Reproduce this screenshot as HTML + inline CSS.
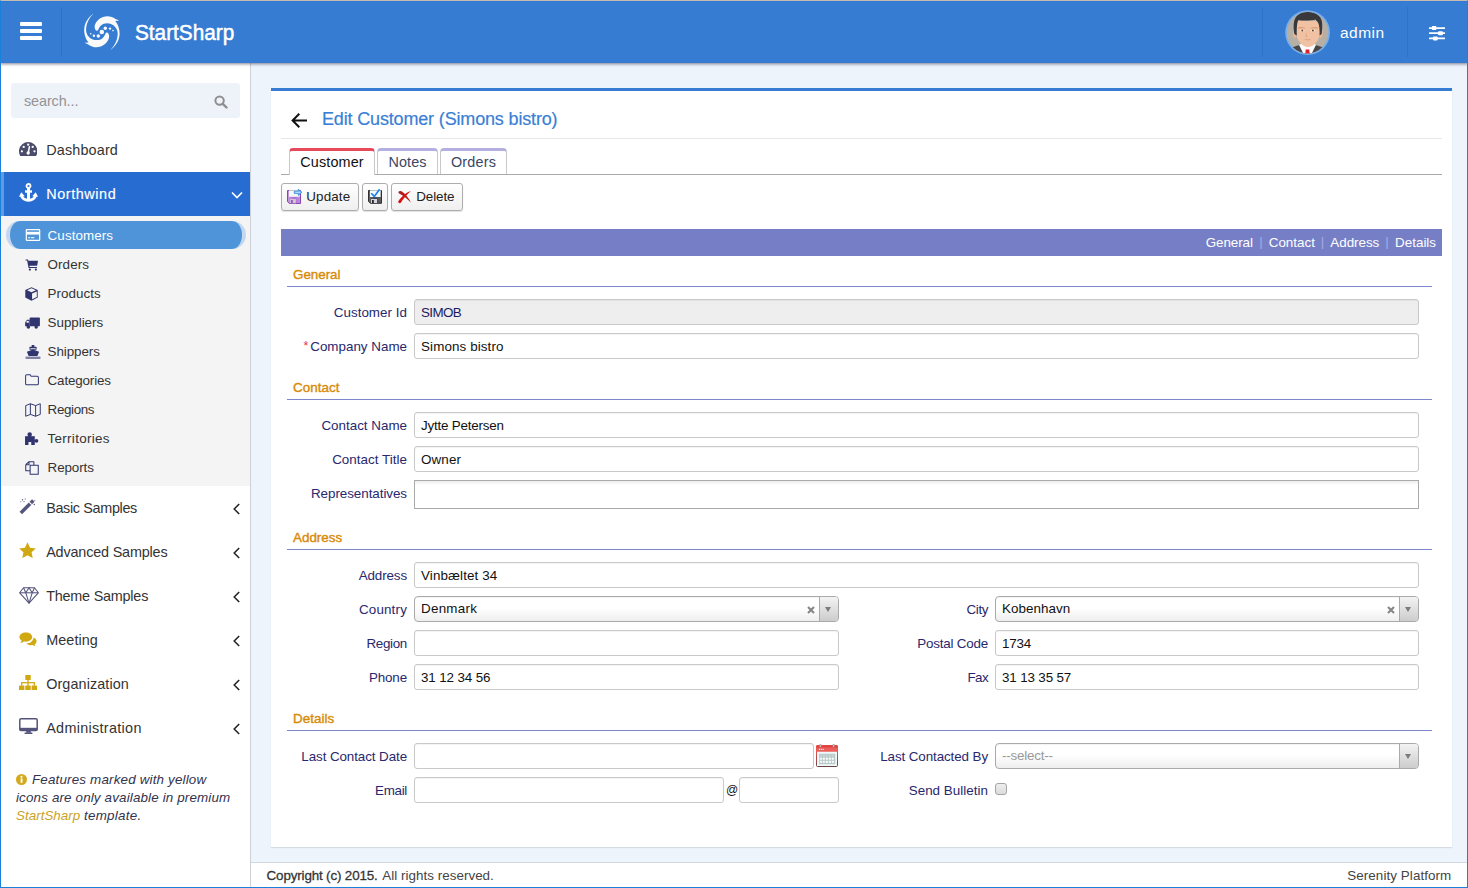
<!DOCTYPE html>
<html lang="en">
<head>
<meta charset="utf-8">
<title>Edit Customer (Simons bistro) - StartSharp</title>
<style>
*{box-sizing:border-box;margin:0;padding:0}
html,body{width:1468px;height:888px;overflow:hidden}
body{position:relative;background:#edf4fc;font-family:"Liberation Sans","DejaVu Sans",sans-serif;font-size:13.400px;color:#333}
.abs{position:absolute}
span.w{white-space:nowrap}
#winframe{position:absolute;left:0;top:0;width:1468px;height:888px;border-left:1px solid #1a80da;border-right:1px solid #1a80da;border-bottom:1px solid #1a80da;border-top:1px solid #c8bcb0;z-index:50;pointer-events:none}
#header{position:absolute;left:0;top:1px;width:1468px;height:62px;background:#367cd2;box-shadow:0 1px 3px rgba(50,40,70,.6),inset 0 1px 0 #2f79d8;z-index:10}
#header .sep{position:absolute;top:6px;width:1px;height:50px;background:#2f72cc}
#brand{position:absolute;left:134.500px;top:15.500px;font-size:22px;color:#fff;line-height:32px;white-space:nowrap;-webkit-text-stroke:.5px #fff;transform-origin:0 50%}
#uname{position:absolute;left:1340px;top:22px;font-size:15.500px;color:#fff;line-height:20px;white-space:nowrap}
#sidebar{position:absolute;left:1px;top:63px;width:250px;height:824px;background:#fff;border-right:1px solid #cdd0d4}
#search{position:absolute;left:10px;top:20px;width:229px;height:35px;background:#eef2f9;border-radius:3px}
#search>span{position:absolute;left:13px;top:9.300px;font-size:14.400px;color:#949494;line-height:18px}
.mi{position:absolute;left:0;width:249px;height:44px;font-size:14.400px;color:#333;line-height:44px;white-space:nowrap}
.mi .t{position:absolute;left:45.200px;top:0}
.mi svg.ic{position:absolute}
.mi svg.ch{position:absolute;left:232px;top:17px}
.mi.act{background:#276dd1;color:#fff}
.mi.act:before{content:"";position:absolute;left:0;top:0;width:3px;height:44px;background:#5e9ae6}
#sub{position:absolute;left:0;top:153px;width:249px;height:270px;background:#f4f4f4}
.si{position:absolute;left:0;width:249px;height:29px;font-size:13.400px;color:#333;line-height:29px;white-space:nowrap}
.si .t{position:absolute;left:46.600px;top:0}
.si svg{position:absolute}
.si.act{left:5px;width:240px;top:5px;height:28px;line-height:30px;border-radius:14px;background:#4f93d8;color:#fff;border-left:4px solid #c3d7f1;border-right:4px solid #c3d7f1}
.si.act .t{left:37.600px}
#note{position:absolute;left:15px;top:708px;width:232px;font-size:13.400px;font-style:italic;line-height:18px;color:#33334d;white-space:nowrap}
#note b{font-weight:normal;color:#c9a227}
#panel{position:absolute;left:271px;top:88px;width:1181px;height:759px;background:#fff;border-top:3px solid #367cd2;box-shadow:0 1px 1px rgba(0,0,0,.1)}
#title{position:absolute;font-size:18px;color:#3a7fd5;-webkit-text-stroke:.2px #3a7fd5;line-height:24px;white-space:nowrap}
#hr1{position:absolute;left:10px;width:1161px;height:1px;background:#e7e7e7}
#tabline{position:absolute;left:10px;width:1161px;height:1px;background:#aaa}
.tab{position:absolute;height:26px;border:1px solid #c9c9c9;border-top:3px solid #b3b0e0;border-bottom:none;border-radius:4px 4px 0 0;background:#fff;font-size:14.400px;color:#3b4666;text-align:center;line-height:23px;white-space:nowrap}
.tab.act{border-top-color:#e5495a;color:#111;height:27px}
.btn{position:absolute;height:28px;border:1px solid #adadad;border-radius:3px;background:linear-gradient(#fff,#efefef);font-size:13.400px;color:#222;line-height:26px;box-shadow:0 1px 1px rgba(0,0,0,.12);white-space:nowrap}
.btn .t{position:absolute;top:0}
.btn svg{position:absolute}
#catbar{position:absolute;width:1161px;height:27px;background:#767fc6;color:#fff;font-size:13.400px;line-height:27px;white-space:nowrap}
#catbar span{position:absolute;top:0}
#catbar i{position:absolute;top:-1px;font-style:normal;color:#a4abe6}
.cat{position:absolute;font-size:13.400px;color:#d88a06;line-height:18px;white-space:nowrap;-webkit-text-stroke:.38px #d88a06}
.cline{position:absolute;width:1145px;height:1px;background:#7d85cb}
.lbl{position:absolute;width:160px;text-align:right;font-size:13.400px;color:#28286e;line-height:18px;white-space:nowrap}
.lbl sup{color:#e8304a;font-size:12.500px;position:relative;top:-1px;margin-right:2px;line-height:1;vertical-align:baseline}
.fld{position:absolute;height:26px;border:1px solid #c9c9c9;border-radius:3px;background:#fff;font-size:13.400px;color:#111;line-height:26px;padding-left:6px;white-space:nowrap;box-shadow:inset 0 1px 1px rgba(0,0,0,.05)}
.fld.ro{background:#eeeeee;color:#1b1b60}
.fld.multi{border-color:#aaa;border-radius:0;background:linear-gradient(#eee 1%,#fff 15%);box-shadow:none}
.fld.sel{border-color:#aaa;background:linear-gradient(#fff 45%,#eee);line-height:24px;border-radius:4px}
.fld.sel .arr{position:absolute;right:0;top:0;width:19px;height:24px;border-left:1px solid #aaa;background:linear-gradient(#f3f3f3,#ccc);border-radius:0 3px 3px 0}
.fld.sel .arr:after{content:"";position:absolute;left:4.700px;top:10.400px;border:3.300px solid transparent;border-top:5px solid #7c7c7c;border-bottom:none}
.fld.sel svg.x{position:absolute;right:23px;top:8.500px}
#footer{position:absolute;left:251px;top:862px;width:1216px;height:25px;background:#fff;border-top:1px solid #d3d9e4;font-size:13.400px;color:#444;line-height:25px;white-space:nowrap}
#footer .l{position:absolute;left:15.600px;top:0}
#footer .r{position:absolute;right:15.700px;top:0}
#footer b{color:#333;font-weight:normal;-webkit-text-stroke:.28px #333;margin-right:1px}
</style>
</head>
<body>
<div id="header">
<svg class="abs" style="left:20px;top:21px" width="22" height="18" viewBox="0 0 22 18"><rect x="0" y="0" width="22" height="4" rx="1" fill="#fff"/><rect x="0" y="7" width="22" height="4" rx="1" fill="#fff"/><rect x="0" y="14" width="22" height="4" rx="1" fill="#fff"/></svg>
<div class="sep" style="left:61px"></div>
<svg class="abs" style="left:80px;top:9px" width="44" height="44" viewBox="0 0 44 44">
<g fill="#fafafa">
<path d="M14.600 16.800 C15 12.500 18.500 8.500 23 6.900 C27.500 5.400 32 6.300 35.500 9 L39.200 10.600 L35.200 11 C37.800 14 39.800 19 39.600 24 C39.400 30 36 36 30.200 40 C35 35.500 37.400 30 37.700 24 C37.900 19.500 35 15.500 31 14 C27.500 12.600 23.500 13.300 21 15.500 C19.500 17 18.700 18.500 18.300 19.800 C17.800 21.200 15.900 21 15.400 19.800 C14.900 18.800 14.600 17.800 14.600 16.800 Z"/>
<path transform="rotate(180 21.900 21.700)" d="M14.600 16.800 C15 12.500 18.500 8.500 23 6.900 C27.500 5.400 32 6.300 35.500 9 L39.200 10.600 L35.200 11 C37.800 14 39.800 19 39.600 24 C39.400 30 36 36 30.200 40 C35 35.500 37.400 30 37.700 24 C37.900 19.500 35 15.500 31 14 C27.500 12.600 23.500 13.300 21 15.500 C19.500 17 18.700 18.500 18.300 19.800 C17.800 21.200 15.900 21 15.400 19.800 C14.900 18.800 14.600 17.800 14.600 16.800 Z"/>
<circle cx="21.800" cy="22.050" r="2.250"/><circle cx="25.300" cy="18.300" r="1.700"/><circle cx="30" cy="18.600" r="1.200"/><circle cx="33" cy="20.600" r=".8"/><circle cx="18.300" cy="26" r="1.700"/><circle cx="13.900" cy="25.800" r="1.200"/><circle cx="10.700" cy="23.700" r=".8"/>
</g></svg>
<div id="brand" style="transform:scaleX(0.9432)"><span class="w">StartSharp</span></div>
<div class="sep" style="left:1262px"></div>
<svg class="abs" style="left:1282px;top:6px" width="52" height="52" viewBox="0 0 52 52">
<defs><clipPath id="avc"><circle cx="25.600" cy="25.600" r="20.800"/></clipPath></defs>
<circle cx="25.600" cy="25.600" r="22.400" fill="#78aeeb"/>
<circle cx="25.600" cy="25.600" r="20.800" fill="#b5afa5"/>
<g clip-path="url(#avc)">
<path d="M8 48 L9.500 41.500 C11 39.800 14 39 17 38.300 L34 38.300 C37 39 40 39.800 41.500 41.500 L43 48Z" fill="#47474a"/>
<path d="M17 37.800 L21 36.500 L31 36.500 L34 37.800 L30 46 L25.500 47 L21 46Z" fill="#fbfbfb"/>
<path d="M23.700 42.400 L27.200 42.400 L27.800 47 L23.200 47Z" fill="#e0202a"/>
<ellipse cx="12.800" cy="26.300" rx="1.900" ry="4.600" fill="#eab391"/><ellipse cx="38.800" cy="26.300" rx="1.900" ry="4.600" fill="#eab391"/>
<path d="M14.600 14 L37.500 14 L37.500 28 C37.300 31.500 35 35 31.500 38 C29.500 39.600 27.500 40 26 40 C24.500 40 22.500 39.600 20.500 38 C17 35 14.800 31.500 14.600 28Z" fill="#f0c2a3"/>
<path d="M12.300 27 C11 18 11.500 11 16 8 C19 5.500 23 5 26 5.100 C30 5 34 6 37 9 C41 12.500 40.500 19 39.700 27 L37.600 28.500 C37.800 23 37.500 18.500 36 15.500 L33.500 12.500 C29 14 20 13.800 16.500 13 C15 15.500 14.600 20 14.800 28.500Z" fill="#39393b"/>
<path d="M16.100 20.600 C18.500 19.900 21 20 23.400 20.900 L23.400 21.600 C21 21 18.500 21 16.100 21.600Z M35.700 20.600 C33.300 19.900 30.800 20 28.400 20.900 L28.400 21.600 C30.800 21 33.300 21 35.700 21.600Z" fill="#dd8f62"/>
<ellipse cx="20.200" cy="23.500" rx="2.300" ry="1" fill="#f6ede6"/><ellipse cx="31" cy="23.500" rx="2.300" ry="1" fill="#f6ede6"/>
<circle cx="20.300" cy="23.400" r="1" fill="#6b4428"/><circle cx="30.900" cy="23.400" r="1" fill="#6b4428"/>
<path d="M24.200 24.500 L23.500 30 L25.600 30.500Z" fill="#e3aa88"/>
<path d="M22.800 32.500 Q25.600 33.300 28.600 32.500" stroke="#d39478" stroke-width=".7" fill="none"/>
</g></svg>
<div id="uname"><span class="w" style="letter-spacing:0.45px">admin</span></div>
<div class="sep" style="left:1407px"></div>
<svg class="abs" style="left:1429px;top:25px" width="16.400" height="14.500" viewBox="0 0 16.400 14.500"><g fill="#fff"><rect x="0" y="1.250" width="16.400" height="1.700" rx=".3"/><rect x="0" y="6.350" width="16.400" height="1.700" rx=".3"/><rect x="0" y="11.550" width="16.400" height="1.700" rx=".3"/><rect x="2.800" y="0.100" width="4.600" height="4" rx=".8"/><rect x="9.100" y="5.200" width="4.800" height="4" rx=".8"/><rect x="4" y="10.400" width="4.700" height="4" rx=".8"/></g></svg>
</div>
<div id="sidebar">
<div id="search"><span><span class="w" style="letter-spacing:-0.1px">search...</span></span><svg class="abs" style="left:203px;top:11.500px" width="14" height="14" viewBox="0 0 14 14"><circle cx="5.600" cy="5.600" r="4.200" fill="none" stroke="#8f8f8f" stroke-width="2"/><path d="M8.800 8.800 L12.500 12.500" stroke="#8f8f8f" stroke-width="2.400" stroke-linecap="round"/></svg></div>
<div class="mi" style="top:65px"><svg class="ic" style="left:18px;top:14px" width="18.4" height="14" viewBox="0 0 18.400 14"><path d="M1.350 14 A9.200 9.200 0 1 1 17.050 14 Z" fill="#4b4b6b"/><circle cx="9.200" cy="11" r="1.700" fill="#fff"/><path d="M9.200 11 L10.400 4.800" stroke="#fff" stroke-width="1.500" stroke-linecap="round"/><circle cx="2.900" cy="9.300" r="1.150" fill="#fff"/><circle cx="4.700" cy="4.900" r="1.150" fill="#fff"/><circle cx="9.200" cy="2.700" r="1.150" fill="#fff"/><circle cx="13.700" cy="4.900" r="1.150" fill="#fff"/><circle cx="15.500" cy="9.300" r="1.150" fill="#fff"/></svg><span class="t"><span class="w" style="letter-spacing:0.16px">Dashboard</span></span></div>
<div class="mi act" style="top:109px"><svg class="ic" style="left:18px;top:11px" width="19" height="19" viewBox="0 0 19 19"><g fill="none" stroke="#fff"><circle cx="9.500" cy="3" r="2" stroke-width="1.800"/><path d="M9.500 5 V17.500" stroke-width="3"/><path d="M6 8.500 H13" stroke-width="2.400"/><path d="M2.300 11.800 C2.800 15.300 6 17.300 9.500 17.300 C13 17.300 16.200 15.300 16.700 11.800" stroke-width="2.800"/></g><path d="M0 13.800 L2.300 9.300 L5.800 13.300Z M13.200 13.300 L16.700 9.300 L19 13.800Z" fill="#fff"/></svg><span class="t" style="-webkit-text-stroke:.15px #fff"><span class="w" style="letter-spacing:0.59px">Northwind</span></span><svg class="ch" style="left:229.500px;top:18.500px" width="12" height="8" viewBox="0 0 12 8"><path d="M1 1.500 L6 6.500 L11 1.500" stroke="#fff" stroke-width="1.600" fill="none"/></svg></div>
<div id="sub">
<div class="si act"><svg class="s" style="left:14.500px;top:8px" width="16" height="12" viewBox="0 0 17 14"><rect x=".7" y=".7" width="15.600" height="12.600" rx=".8" fill="none" stroke="#fff" stroke-width="1.400"/><rect x="1" y="3.300" width="15" height="3.200" fill="#fff"/><rect x="3" y="9.500" width="2" height="1.300" fill="#fff"/><rect x="6" y="9.500" width="4" height="1.300" fill="#fff"/></svg><span class="t"><span class="w" style="letter-spacing:0.09px">Customers</span></span></div>
<div class="si" style="top:34px"><svg class="s" style="left:24px;top:9px" width="14" height="12" viewBox="0 0 15 14"><path d="M0 0.500 H2.800 L3.300 2 H14.500 L13.500 7.800 H4.500 L4.800 9.300 H13.300 V10.500 H3.500 L1.800 1.700 H0Z" fill="#30356f"/><circle cx="5" cy="12.300" r="1.300" fill="#30356f"/><circle cx="12" cy="12.300" r="1.300" fill="#30356f"/></svg><span class="t"><span class="w" style="letter-spacing:0.07px">Orders</span></span></div>
<div class="si" style="top:63px"><svg class="s" style="left:24px;top:8px" width="13" height="14" viewBox="0 0 14 15"><path d="M7 0.300 L13.700 3.300 V11.300 L7 14.700 L0.300 11.300 V3.300Z" fill="#30356f"/><path d="M12.700 4.700 L7.600 7 V13.200 L12.700 10.700Z" fill="#f4f4f4"/><path d="M2.300 3.500 L7 1.400 L11.700 3.500 L7 5.700Z" fill="#f4f4f4"/></svg><span class="t"><span class="w" style="letter-spacing:0.02px">Products</span></span></div>
<div class="si" style="top:92px"><svg class="s" style="left:24px;top:9px" width="15" height="12" viewBox="0 0 16 13"><g fill="#30356f"><rect x="5" y="0.500" width="11" height="9.500" rx=".8"/><path d="M0 10 V6 L2 3 H5 V10Z"/><circle cx="3.500" cy="10.700" r="1.900"/><circle cx="12" cy="10.700" r="1.900"/></g><rect x="1.500" y="4.200" width="2.500" height="2" fill="#f4f4f4"/></svg><span class="t"><span class="w" style="letter-spacing:-0.04px">Suppliers</span></span></div>
<div class="si" style="top:121px"><svg class="s" style="left:24px;top:8px" width="16" height="14" viewBox="0 0 17 16"><g fill="#30356f"><rect x="7" y="0" width="3" height="2.500"/><rect x="4.500" y="2" width="8" height="3.500" rx=".5"/><path d="M1.500 7.800 L8.500 5 L15.500 7.800 L13.500 12.500 H3.500Z"/><path d="M0 13.200 H17 V16 H0Z" opacity=".6"/></g><path d="M5.500 4 h6" stroke="#f4f4f4" stroke-width=".8"/></svg><span class="t"><span class="w" style="letter-spacing:-0.08px">Shippers</span></span></div>
<div class="si" style="top:150px"><svg class="s" style="left:24px;top:8px" width="14" height="11.5" viewBox="0 0 16 13"><path d="M0.700 2 Q0.700 0.800 1.900 0.800 H5.500 Q6.500 0.800 6.500 1.700 Q6.500 2.600 7.500 2.600 H14 Q15.300 2.600 15.300 3.800 V11 Q15.300 12.200 14 12.200 H1.900 Q0.700 12.200 0.700 11Z" fill="none" stroke="#30356f" stroke-width="1.150"/></svg><span class="t"><span class="w" style="letter-spacing:-0.15px">Categories</span></span></div>
<div class="si" style="top:179px"><svg class="s" style="left:24px;top:8px" width="16" height="14" viewBox="0 0 17 15"><path d="M0.700 2.800 L5.700 0.800 L11.300 2.800 L16.300 0.800 V12.200 L11.300 14.200 L5.700 12.200 L0.700 14.200Z M5.700 0.800 V12.200 M11.300 2.800 V14.200" fill="none" stroke="#30356f" stroke-width="1.050" stroke-linejoin="round"/></svg><span class="t"><span class="w" style="letter-spacing:-0.36px">Regions</span></span></div>
<div class="si" style="top:208px"><svg class="s" style="left:24px;top:8px" width="14" height="13" viewBox="0 0 15 14"><g fill="#30356f"><rect x="0" y="4.500" width="10.500" height="9.500"/><circle cx="5" cy="2.800" r="2.400"/><rect x="3.800" y="3" width="2.500" height="2.500"/><circle cx="12.300" cy="9.500" r="2"/><rect x="10" y="8.500" width="2" height="2"/></g><rect x="3.700" y="10.800" width="3" height="3.300" fill="#f4f4f4"/></svg><span class="t"><span class="w" style="letter-spacing:0.3px">Territories</span></span></div>
<div class="si" style="top:237px"><svg class="s" style="left:24px;top:8px" width="14" height="14" viewBox="0 0 15 15"><g fill="none" stroke="#30356f" stroke-width="1.100" stroke-linejoin="round"><path d="M5.500 4.500 H14.200 V14.200 H5.500Z"/><path d="M0.800 4 L4.300 0.800 H9.500 V4.500 M0.800 4 V10.500 H5.500 M0.800 4 H4.300 V0.800"/></g></svg><span class="t"><span class="w" style="letter-spacing:-0.1px">Reports</span></span></div>
</div>
<div class="mi" style="top:423px"><svg class="ic" style="left:18px;top:12px" width="16.5" height="16.5" viewBox="0 0 16.500 16.500"><path d="M1.800 15 L14.300 2.500" stroke="#54547c" stroke-width="3.500" stroke-linecap="butt"/><path d="M11 5.800 L11.900 4.900" stroke="#fff" stroke-width="3.500"/><g fill="#54547c"><circle cx="3.500" cy="1.800" r=".7"/><circle cx="6.200" cy="1" r=".6"/><circle cx="5" cy="3.600" r=".6"/><circle cx="1.800" cy="3.800" r=".5"/><circle cx="15.300" cy="6.500" r=".7"/><circle cx="15.800" cy="2.200" r=".5"/></g></svg><span class="t"><span class="w" style="letter-spacing:-0.34px">Basic Samples</span></span><svg class="ch" width="8" height="12" viewBox="0 0 8 12"><path d="M6.200 1 L1.200 6 L6.200 11" stroke="#222" stroke-width="1.500" fill="none"/></svg></div>
<div class="mi" style="top:467px"><svg class="ic" style="left:17.800px;top:11.800px" width="17" height="16.2" viewBox="0 0 18 17"><path d="M9 0.300 L11.700 5.900 L17.800 6.700 L13.300 10.900 L14.500 17 L9 14 L3.500 17 L4.700 10.900 L0.200 6.700 L6.300 5.900Z" fill="#d0a80f"/></svg><span class="t"><span class="w" style="letter-spacing:-0.17px">Advanced Samples</span></span><svg class="ch" width="8" height="12" viewBox="0 0 8 12"><path d="M6.200 1 L1.200 6 L6.200 11" stroke="#222" stroke-width="1.500" fill="none"/></svg></div>
<div class="mi" style="top:511px"><svg class="ic" style="left:18.200px;top:12.500px" width="20" height="17" viewBox="0 0 20 17"><g fill="none" stroke="#54547c" stroke-width="1.050" stroke-linejoin="round"><path d="M4.500 0.800 H15.500 L19.300 5.800 L10 16.200 L0.700 5.800Z"/><path d="M0.700 5.800 H19.300"/><path d="M4.500 0.800 L6.800 5.800 L10 16.200 L13.200 5.800 L15.500 0.800"/><path d="M6.800 5.800 L10 0.800 L13.200 5.800"/></g></svg><span class="t"><span class="w" style="letter-spacing:-0.22px">Theme Samples</span></span><svg class="ch" width="8" height="12" viewBox="0 0 8 12"><path d="M6.200 1 L1.200 6 L6.200 11" stroke="#222" stroke-width="1.500" fill="none"/></svg></div>
<div class="mi" style="top:555px"><svg class="ic" style="left:18px;top:13.800px" width="18" height="14" viewBox="0 0 20 16"><path d="M7.500 0.500 C11.500 0.500 14.800 2.800 14.800 5.800 C14.800 8.800 11.500 11.100 7.500 11.100 C6.800 11.100 6.200 11 5.500 10.900 C4.300 11.900 2.800 12.400 1.200 12.500 C2 11.700 2.500 10.900 2.700 9.800 C1.200 8.800 0.200 7.400 0.200 5.800 C0.200 2.800 3.500 0.500 7.500 0.500Z" fill="#d0a80f"/><path d="M16.300 6.300 C18.300 7.200 19.800 8.700 19.800 10.500 C19.800 12 18.900 13.300 17.500 14.200 C17.700 15 18.200 15.600 18.900 16 C17.500 16 16.200 15.600 15.200 14.900 C14.600 15 14.100 15.100 13.500 15.100 C11.300 15.100 9.400 14.300 8.300 13 C12.500 13 16.300 10.200 16.300 6.300Z" fill="#d0a80f"/></svg><span class="t"><span class="w" style="letter-spacing:0.08px">Meeting</span></span><svg class="ch" width="8" height="12" viewBox="0 0 8 12"><path d="M6.200 1 L1.200 6 L6.200 11" stroke="#222" stroke-width="1.500" fill="none"/></svg></div>
<div class="mi" style="top:599px"><svg class="ic" style="left:18px;top:12.700px" width="18" height="15.4" viewBox="0 0 20 17"><g fill="#d0a80f"><rect x="7" y="0" width="6" height="5.500" rx=".6"/><rect x="0" y="11.500" width="6" height="5.500" rx=".6"/><rect x="7" y="11.500" width="6" height="5.500" rx=".6"/><rect x="14" y="11.500" width="6" height="5.500" rx=".6"/><rect x="9.300" y="5" width="1.400" height="7"/><rect x="2.300" y="7.800" width="15.400" height="1.400"/><rect x="2.300" y="7.800" width="1.400" height="4"/><rect x="16.300" y="7.800" width="1.400" height="4"/></g></svg><span class="t"><span class="w" style="letter-spacing:0.09px">Organization</span></span><svg class="ch" width="8" height="12" viewBox="0 0 8 12"><path d="M6.200 1 L1.200 6 L6.200 11" stroke="#222" stroke-width="1.500" fill="none"/></svg></div>
<div class="mi" style="top:643px"><svg class="ic" style="left:18px;top:12px" width="19" height="16" viewBox="0 0 19 16"><rect x=".8" y=".8" width="17.400" height="11.800" rx="1.300" fill="none" stroke="#54547c" stroke-width="1.500"/><rect x=".8" y="9.800" width="17.400" height="2.800" fill="#54547c"/><path d="M7.500 12.500 H11.500 L12 14.800 H7Z" fill="#54547c"/><rect x="5.500" y="14.500" width="8" height="1.500" rx=".4" fill="#54547c"/></svg><span class="t"><span class="w" style="letter-spacing:0.31px">Administration</span></span><svg class="ch" width="8" height="12" viewBox="0 0 8 12"><path d="M6.200 1 L1.200 6 L6.200 11" stroke="#222" stroke-width="1.500" fill="none"/></svg></div>
<div id="note"><svg style="vertical-align:-1px;margin-right:5px" width="11" height="11" viewBox="0 0 11 11"><circle cx="5.500" cy="5.500" r="5.500" fill="#d4a91c"/><rect x="4.600" y="4.500" width="1.900" height="4.300" fill="#fff"/><circle cx="5.500" cy="2.800" r="1.100" fill="#fff"/></svg><span class="w" style="letter-spacing:0.17px">Features marked with yellow</span><br><span class="w" style="letter-spacing:0.15px">icons are only available in premium</span><br><b><span class="w" style="letter-spacing:0.02px">StartSharp</span></b> <span class="w" style="letter-spacing:0.26px">template.</span></div>
</div>
<div id="panel">
<svg class="abs" style="left:20px;top:21px" width="17" height="17" viewBox="0 0 17 17"><path d="M16 8.500 H2 M8.300 1.800 L1.600 8.500 L8.300 15.200" fill="none" stroke="#111" stroke-width="2"/></svg>
<div id="title" style="left:51px;top:16px"><span class="w" style="letter-spacing:-0.16px">Edit Customer (Simons bistro)</span></div>
<div id="hr1" style="top:47px"></div>
<div id="tabline" style="top:83px"></div>
<div class="tab act" style="left:18px;top:57px;width:86px"><span class="w" style="letter-spacing:0.14px">Customer</span></div>
<div class="tab" style="left:106px;top:57px;width:61px"><span class="w" style="letter-spacing:0.13px">Notes</span></div>
<div class="tab" style="left:169px;top:57px;width:67px"><span class="w" style="letter-spacing:0.2px">Orders</span></div>
<div class="btn" style="left:10px;top:92px;width:78px"><svg style="left:1px;top:1px" width="24" height="24" viewBox="0 0 24 24"><defs><linearGradient id="sg" x1="0" y1="0" x2="1" y2="0"><stop offset="0" stop-color="#c79ae6"/><stop offset=".5" stop-color="#a96fd0"/><stop offset="1" stop-color="#c392e3"/></linearGradient></defs><path d="M4.500 5.500 H17.500 V18.500 H6.500 L4.500 16.700Z" fill="url(#sg)" stroke="#8a44b0" stroke-width="1"/><rect x="6" y="5.200" width="10.600" height="6.600" fill="#f4f8f8"/><rect x="6" y="5" width="10.600" height=".8" fill="#b9c4c0"/><rect x="7.200" y="14" width="5.700" height="4.300" fill="#cfc6d6"/><rect x="8.200" y="15" width="1.500" height="3.200" fill="#8f48b5"/><path d="M11.300 6.200 H15.300 V4.200 L19 7.300 L15.300 10.400 V8.400 H11.300Z" fill="#63b8f5" stroke="#2f7fd8" stroke-width=".7" stroke-linejoin="round"/><path d="M12.300 7.300 H17.300" stroke="#d9f1ff" stroke-width=".8"/></svg><span class="t" style="left:24.300px"><span class="w" style="letter-spacing:0.14px">Update</span></span></div>
<div class="btn" style="left:91px;top:92px;width:26px"><svg style="left:0;top:1px" width="24" height="24" viewBox="0 0 24 24"><defs><linearGradient id="ag" x1="0" y1="0" x2="1" y2="0"><stop offset="0" stop-color="#6a6a6a"/><stop offset=".5" stop-color="#444"/><stop offset="1" stop-color="#666"/></linearGradient></defs><path d="M5.500 5.500 H18.500 V18.300 H7.500 L5.500 16.500Z" fill="url(#ag)" stroke="#303030" stroke-width="1"/><rect x="7" y="5.300" width="10.600" height="6.700" fill="#f2f8f8"/><rect x="7" y="5.100" width="10.600" height=".8" fill="#b9c8c6"/><rect x="8" y="14" width="6" height="4" fill="#d4d2e2"/><rect x="9" y="15" width="1.800" height="3" fill="#262626"/><path d="M8.300 8.300 L11.300 11.400 L16.600 4.300" fill="none" stroke="#1f7ef0" stroke-width="1.600"/></svg></div>
<div class="btn" style="left:120px;top:92px;width:72px"><svg style="left:5px;top:6px" width="15" height="14" viewBox="0 0 15 14"><path d="M1.500 1.800 C2.500 0.500 4.500 0.900 5.600 2 C8.800 4.300 12 8.500 14 12.800 C10.300 9.200 7 6.200 3 4.100 C1.800 3.500 1.100 2.600 1.500 1.800Z" fill="#b51c1c"/><path d="M1.200 11.500 C3.500 7.500 8.500 2.700 13.900 0.900 C9.900 4.500 6 8.500 4 12.600 C3.200 13.700 1 13.200 1.200 11.500Z" fill="#d81310"/></svg><span class="t" style="left:24.300px"><span class="w" style="letter-spacing:-0.1px">Delete</span></span></div>
<div id="catbar" style="left:10px;top:138px"><span style="left:924.7px"><span class="w" style="letter-spacing:-0.06px">General</span></span> <i style="left:978.2px">|</i> <span style="left:987.7px"><span class="w" style="letter-spacing:0.02px">Contact</span></span> <i style="left:1039.8px">|</i> <span style="left:1049.3px"><span class="w" style="letter-spacing:-0.02px">Address</span></span> <i style="left:1104.3px">|</i> <span style="left:1114.1px"><span class="w">Details</span></span> </div>
<div class="cat" style="left:22px;top:175px"><span class="w" style="letter-spacing:-0.02px">General</span></div>
<div class="cline" style="left:16px;top:195px"></div>
<div class="lbl" style="left:-24px;top:213px"><span class="w" style="letter-spacing:0.03px">Customer Id</span></div>
<div class="fld ro" style="left:143px;top:208px;width:1005px;height:26px"><span class="w" style="letter-spacing:-0.6px">SIMOB</span></div>
<div class="lbl" style="left:-24px;top:247px"><sup>*</sup><span class="w">Company Name</span></div>
<div class="fld" style="left:143px;top:242px;width:1005px;height:26px"><span class="w" style="letter-spacing:0.11px">Simons bistro</span></div>
<div class="cat" style="left:22px;top:288px"><span class="w" style="letter-spacing:0.07px">Contact</span></div>
<div class="cline" style="left:16px;top:308px"></div>
<div class="lbl" style="left:-24px;top:326px"><span class="w">Contact Name</span></div>
<div class="fld" style="left:143px;top:321px;width:1005px;height:26px"><span class="w" style="letter-spacing:-0.2px">Jytte Petersen</span></div>
<div class="lbl" style="left:-24px;top:360px"><span class="w" style="letter-spacing:0.03px">Contact Title</span></div>
<div class="fld" style="left:143px;top:355px;width:1005px;height:26px"><span class="w" style="letter-spacing:0.14px">Owner</span></div>
<div class="lbl" style="left:-24px;top:394px"><span class="w" style="letter-spacing:-0.05px">Representatives</span></div>
<div class="fld multi" style="left:143px;top:389px;width:1005px;height:29px"></div>
<div class="cat" style="left:22px;top:438px"><span class="w">Address</span></div>
<div class="cline" style="left:16px;top:458px"></div>
<div class="lbl" style="left:-24px;top:476px"><span class="w" style="letter-spacing:-0.12px">Address</span></div>
<div class="fld" style="left:143px;top:471px;width:1005px;height:26px"><span class="w" style="letter-spacing:0.12px">Vinbæltet 34</span></div>
<div class="lbl" style="left:-24px;top:510px"><span class="w" style="letter-spacing:0.17px">Country</span></div>
<div class="fld sel" style="left:143px;top:505px;width:425px;height:26px"><span class="w" style="letter-spacing:0.26px">Denmark</span><svg class="x" width="8" height="8" viewBox="0 0 8 8"><path d="M1 1 L7 7 M7 1 L1 7" stroke="#858585" stroke-width="2.100"/></svg><span class="arr"></span></div>
<div class="lbl" style="left:557px;top:510px"><span class="w" style="letter-spacing:-0.42px">City</span></div>
<div class="fld sel" style="left:724px;top:505px;width:424px;height:26px"><span class="w" style="letter-spacing:0.07px">Kobenhavn</span><svg class="x" width="8" height="8" viewBox="0 0 8 8"><path d="M1 1 L7 7 M7 1 L1 7" stroke="#858585" stroke-width="2.100"/></svg><span class="arr"></span></div>
<div class="lbl" style="left:-24px;top:544px"><span class="w" style="letter-spacing:-0.31px">Region</span></div>
<div class="fld" style="left:143px;top:539px;width:425px;height:26px"></div>
<div class="lbl" style="left:557px;top:544px"><span class="w" style="letter-spacing:-0.19px">Postal Code</span></div>
<div class="fld" style="left:724px;top:539px;width:424px;height:26px"><span class="w" style="letter-spacing:-0.2px">1734</span></div>
<div class="lbl" style="left:-24px;top:578px"><span class="w" style="letter-spacing:-0.13px">Phone</span></div>
<div class="fld" style="left:143px;top:573px;width:425px;height:26px"><span class="w" style="letter-spacing:-0.13px">31 12 34 56</span></div>
<div class="lbl" style="left:557px;top:578px"><span class="w" style="letter-spacing:-0.6px">Fax</span></div>
<div class="fld" style="left:724px;top:573px;width:424px;height:26px"><span class="w" style="letter-spacing:-0.15px">31 13 35 57</span></div>
<div class="cat" style="left:22px;top:619px"><span class="w" style="letter-spacing:0.06px">Details</span></div>
<div class="cline" style="left:16px;top:639px"></div>
<div class="lbl" style="left:-24px;top:657px"><span class="w" style="letter-spacing:-0.09px">Last Contact Date</span></div>
<div class="fld" style="left:143px;top:652px;width:400px;height:26px"></div>
<svg class="abs" style="left:545px;top:653px" width="22" height="23" viewBox="0 0 22 23"><defs><linearGradient id="cg" x1="0" y1="0" x2="0" y2="1"><stop offset="0" stop-color="#e2504a"/><stop offset=".35" stop-color="#d9534f"/><stop offset="1" stop-color="#6b4545"/></linearGradient></defs><rect x=".5" y="1.500" width="21" height="21" rx="1" fill="#eef8f8" stroke="url(#cg)"/><path d="M.3 2.500 Q.3 1.300 1.500 1.300 H20.500 Q21.700 1.300 21.700 2.500 V7.800 H.3Z" fill="#ea5f5a"/><path d="M.3 2.500 Q.3 1.300 1.500 1.300 H20.500 Q21.700 1.300 21.700 2.500 V3.500 H.3Z" fill="#e2403c"/><rect x="3" y="4.800" width="1.100" height="1.100" fill="#fff"/><rect x="4.800" y="4.800" width="1.100" height="1.100" fill="#fff"/><rect x="6.600" y="4.800" width="1.100" height="1.100" fill="#fff"/><rect x="3.700" y=".2" width="1.600" height="3" rx=".8" fill="#e8e8e8" stroke="#8a5a5a" stroke-width=".5"/><rect x="16.800" y=".2" width="1.600" height="3" rx=".8" fill="#e8e8e8" stroke="#8a5a5a" stroke-width=".5"/><rect x="3" y="9.800" width="16.200" height="10.400" fill="#b9c9c9"/><rect x="3.8" y="10.6" width="2" height="2" fill="#c9d6d6"/><rect x="6.8" y="10.6" width="2" height="2" fill="#c9d6d6"/><rect x="9.8" y="10.6" width="2" height="2" fill="#c9d6d6"/><rect x="12.8" y="10.6" width="2" height="2" fill="#c9d6d6"/><rect x="15.8" y="10.6" width="2" height="2" fill="#c9d6d6"/><rect x="3.8" y="13.7" width="2" height="2" fill="#ffffff"/><rect x="6.8" y="13.7" width="2" height="2" fill="#ffffff"/><rect x="9.8" y="13.7" width="2" height="2" fill="#ffffff"/><rect x="12.8" y="13.7" width="2" height="2" fill="#ffffff"/><rect x="15.8" y="13.7" width="2" height="2" fill="#ffffff"/><rect x="3.8" y="16.8" width="2" height="2" fill="#ffffff"/><rect x="6.8" y="16.8" width="2" height="2" fill="#ffffff"/><rect x="9.8" y="16.8" width="2" height="2" fill="#ffffff"/><rect x="12.8" y="16.8" width="2" height="2" fill="#ffffff"/><rect x="15.8" y="16.8" width="2" height="2" fill="#ffffff"/></svg>
<div class="lbl" style="left:557px;top:657px"><span class="w" style="letter-spacing:-0.1px">Last Contacted By</span></div>
<div class="fld sel" style="left:724px;top:652px;width:424px;height:26px"><span style="color:#999"><span class="w" style="letter-spacing:-0.2px">--select--</span></span><span class="arr"></span></div>
<div class="lbl" style="left:-24px;top:691px"><span class="w" style="letter-spacing:-0.3px">Email</span></div>
<div class="fld" style="left:143px;top:686px;width:310px;height:26px"></div>
<div class="abs" style="left:455px;top:691px;font-size:12px;line-height:16px;color:#111">@</div>
<div class="fld" style="left:468px;top:686px;width:100px;height:26px"></div>
<div class="lbl" style="left:557px;top:691px"><span class="w" style="letter-spacing:0.03px">Send Bulletin</span></div>
<div class="abs" style="left:724px;top:692px;width:12px;height:12px;border:1px solid #a4a4a4;border-radius:3px;background:linear-gradient(#eee,#dcdcdc)"></div>
</div>
<div id="footer"><span class="l"><b><span class="w" style="letter-spacing:-0.15px">Copyright (c) 2015.</span></b> <span class="w" style="letter-spacing:0.03px">All rights reserved.</span></span><span class="r"><span class="w" style="letter-spacing:0.08px">Serenity Platform</span></span></div>
<div id="winframe"></div>
</body>
</html>
